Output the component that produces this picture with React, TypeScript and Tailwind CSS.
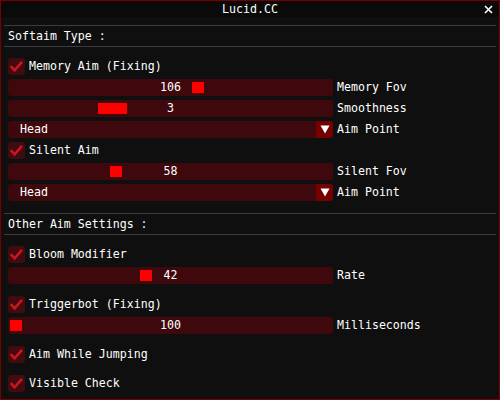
const font = { fontFamily: "'DejaVu Sans Mono', 'Liberation Mono', monospace" };

function Separator({ className = "" }: { className?: string }) {
  return <div className={`h-px mx-[-4px] bg-[#3b3b42] ${className}`} />;
}

function Checkbox({ label, className = "" }: { label: string; className?: string }) {
  return (
    <div className={`flex items-center h-[17px] gap-[4px] ${className}`}>
      <div className="w-[17px] h-[17px] rounded-[3px] bg-[#420b0f] flex items-center justify-center">
        <svg width="17" height="17" viewBox="0 0 17 17">
          <path d="M2.8 8.2 L6.6 12.4 L14 3.8" fill="none" stroke="#cc1520" strokeWidth="2.6" />
        </svg>
      </div>
      <span className="pt-px">{label}</span>
    </div>
  );
}

function Slider({
  value,
  label,
  grabLeft,
  grabWidth = 12,
  className = "",
}: {
  value: number;
  label: string;
  grabLeft: number;
  grabWidth?: number;
  className?: string;
}) {
  return (
    <div className={`flex items-center h-[17px] ${className}`}>
      <div className="relative w-[325px] h-[17px] rounded-[3px] bg-[#3f080c] flex items-center justify-center">
        {/* grab */}
        <div
          className="absolute top-[3px] h-[11px] bg-[#ff0000]"
          style={{ left: grabLeft, width: grabWidth }}
        />
        <span className="relative pt-px">{value}</span>
      </div>
      <span className="ml-[4px] pt-px">{label}</span>
    </div>
  );
}

function Combo({ value, label, className = "" }: { value: string; label: string; className?: string }) {
  return (
    <div className={`flex items-center h-[17px] ${className}`}>
      <div className="w-[325px] h-[17px] rounded-[3px] bg-[#3f080c] flex items-center overflow-hidden">
        <span className="flex-1 pl-[12px] pt-px">{value}</span>
        <div className="w-[17px] h-[17px] bg-[#750000] flex items-center justify-center">
          <svg width="10" height="9" viewBox="0 0 10 9">
            <path d="M0.5 0.5 L9.5 0.5 L5 8.5 Z" fill="#ffffff" />
          </svg>
        </div>
      </div>
      <span className="ml-[4px] pt-px">{label}</span>
    </div>
  );
}

export default function App() {
  return (
    <div
      className="w-[500px] h-[400px] bg-[#0f0f0f] border border-[#7a0000] flex flex-col text-white text-[11.6px] leading-none overflow-hidden"
      style={font}
    >
      {/* Title bar */}
      <div className="relative h-[16px] bg-[#0a0a0a] flex items-center justify-center shrink-0">
        <span className="pt-px">Lucid.CC</span>
        <svg className="absolute right-[6px] top-[4px]" width="9" height="9" viewBox="0 0 9 9">
          <path d="M1 1 L8 8 M8 1 L1 8" stroke="#ffffff" strokeWidth="1.6" />
        </svg>
      </div>

      <div className="flex flex-col px-[7px]">
        <Separator className="mt-[8px]" />
        <div className="h-[20px] flex items-center pt-px">Softaim Type :</div>
        <Separator />

        <Checkbox label="Memory Aim (Fixing)" className="mt-[11px]" />
        <Slider value={106} label="Memory Fov" grabLeft={184} className="mt-[4px]" />
        <Slider value={3} label="Smoothness" grabLeft={90} grabWidth={29} className="mt-[4px]" />
        <Combo value="Head" label="Aim Point" className="mt-[4px]" />
        <Checkbox label="Silent Aim" className="mt-[4px]" />
        <Slider value={58} label="Silent Fov" grabLeft={102} className="mt-[4px]" />
        <Combo value="Head" label="Aim Point" className="mt-[4px]" />

        <Separator className="mt-[12px]" />
        <div className="h-[20px] flex items-center pt-px">Other Aim Settings :</div>
        <Separator />

        <Checkbox label="Bloom Modifier" className="mt-[11px]" />
        <Slider value={42} label="Rate" grabLeft={132} className="mt-[4px]" />
        <Checkbox label="Triggerbot (Fixing)" className="mt-[12px]" />
        <Slider value={100} label="Milliseconds" grabLeft={2} className="mt-[4px]" />
        <Checkbox label="Aim While Jumping" className="mt-[12px]" />
        <Checkbox label="Visible Check" className="mt-[12px]" />
      </div>
    </div>
  );
}
